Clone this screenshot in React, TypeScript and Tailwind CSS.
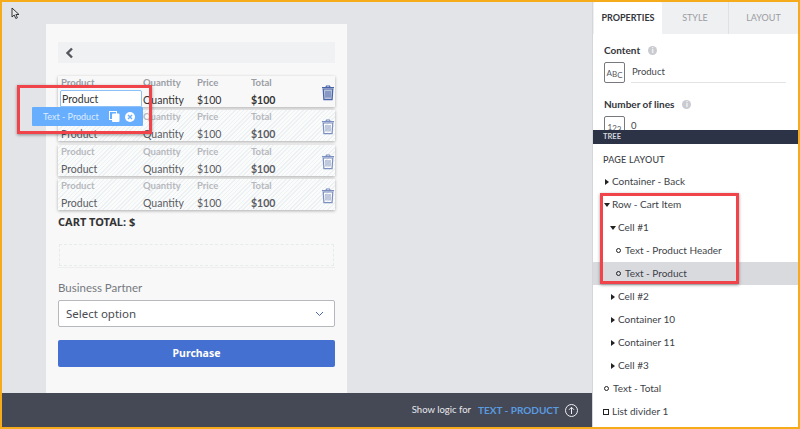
import React from "react";

const Trash = ({ ghost }: { ghost?: boolean }) => (
  <svg width="14" height="16" viewBox="0 0 14 16" fill="none" className={ghost ? "opacity-70" : ""}>
    <path d="M1 2.6h12M4.8 2.4l.7-1.4h3l.7 1.4" stroke="#4a64a8" strokeWidth="1.2" />
    <path d="M2.2 4h9.6l-.7 10.6H2.9z" fill={ghost ? "none" : "#b9c3db"} stroke="#4a64a8" strokeWidth="1.2" />
    <path d="M5 6v6.5M7 6v6.5M9 6v6.5" stroke="#4a64a8" strokeWidth="0.9" />
  </svg>
);

const CartRow = ({ active }: { active?: boolean }) => {
  const head = `text-[9.5px] leading-[14px] font-bold ${active ? "text-[#9a9da4]" : "text-[#b6b8bd]"}`;
  const value = `mt-[3px] text-[10.5px] leading-[14px] ${active ? "text-[#333]" : "text-[#5a5c62]"}`;
  return (
    <div
      className={`flex h-[31px] w-full items-stretch shadow-[0_1px_3px_rgba(0,0,0,0.3)] ${
        active
          ? "bg-[#f8f8f9]"
          : "bg-[repeating-linear-gradient(135deg,#fafbfb_0px,#fafbfb_2px,#edf1f4_2px,#edf1f4_3px)]"
      }`}
    >
      <div className="flex w-[85px] flex-col pl-[3px]">
        <span className={head}>Product</span>
        {active ? (
          <span className="mt-[0px] -ml-[1px] h-[17px] w-[82px] rounded-t-[2px] border border-[#8cc0f7] bg-white pt-[1px] pl-[1px] text-[10.5px] leading-[14px] text-[#333]">
            Product
          </span>
        ) : (
          <span className={value}>Product</span>
        )}
      </div>
      <div className="flex w-[54px] flex-col">
        <span className={head}>Quantity</span>
        <span className={value}>Quantity</span>
      </div>
      <div className="flex w-[54px] flex-col">
        <span className={head}>Price</span>
        <span className={value}>$100</span>
      </div>
      <div className="flex w-[70px] flex-col">
        <span className={head}>Total</span>
        <span className={`${value} font-bold`}>$100</span>
      </div>
      <div className="pt-[9px]">
        <Trash ghost={!active} />
      </div>
    </div>
  );
};

const Caret = ({ open }: { open?: boolean }) =>
  open ? (
    <span className="mr-[2px] h-0 w-0 border-x-[3.5px] border-t-[4px] border-x-transparent border-t-[#222]" />
  ) : (
    <span className="mr-[3px] ml-[1px] h-0 w-0 border-y-[3.5px] border-l-[4px] border-y-transparent border-l-[#222]" />
  );

const TreeRow = ({
  label,
  kind,
  indent,
  selected,
}: {
  label: string;
  kind: "closed" | "open" | "circle" | "square";
  indent: string;
  selected?: boolean;
}) => (
  <div className={`flex h-[23px] items-center ${indent} ${selected ? "bg-[#d9dade]" : ""}`}>
    {kind === "closed" && <Caret />}
    {kind === "open" && <Caret open />}
    {kind === "circle" && <span className="mr-[4px] h-[5px] w-[5px] rounded-full border border-[#222]" />}
    {kind === "square" && <span className="mr-[3px] h-[6px] w-[6px] border border-[#222]" />}
    <span className="text-[10px] text-[#3d3f48]">{label}</span>
  </div>
);

const Info = () => (
  <span className="ml-[8px] flex h-[9px] w-[9px] items-center justify-center rounded-full bg-[#c9cbd0] text-[7px] leading-none font-bold text-white">
    i
  </span>
);

export default function App() {
  return (
    <div className="relative flex h-[429px] w-[800px] overflow-hidden border-2 border-[#f5ab1a] bg-white font-['Lato',sans-serif]">
      <div className="flex w-[590px] flex-col bg-[#e3e4e8]">
        <div className="flex min-h-0 flex-1 flex-col pt-[22px] pl-[44px]">
          <div className="flex h-[369px] w-[301px] flex-col bg-[#f8f8f9] px-[12px] pt-[18px]">
            <div className="flex h-[21px] items-center bg-[#f0f1f3] pl-[7px]">
              <svg width="9" height="12" viewBox="0 0 9 12" fill="none">
                <path d="M7 1.5 2.5 6 7 10.5" stroke="#55575e" strokeWidth="2.4" />
              </svg>
            </div>
            <div className="mt-[13px] flex flex-col gap-[3.4px]">
              <CartRow active />
              <CartRow />
              <CartRow />
              <CartRow />
            </div>
            <div className="mt-[4px] font-['Noto_Sans',sans-serif] text-[11px] leading-[16px] font-bold text-[#333]">
              CART TOTAL: $
            </div>
            <div className="mt-[14px] border-b border-[#eceeef] pb-[1px]">
              <div className="mx-[1px] h-[22px] border border-dashed border-[#e6ecea]" />
            </div>
            <div className="mt-[12px] text-[11.5px] leading-[16px] text-[#76787e]">Business Partner</div>
            <div className="mt-[4px] flex h-[27px] items-center justify-between rounded-[2px] border border-[#b6b8bd] bg-white pr-[10px] pl-[7px] font-['Noto_Sans',sans-serif]">
              <span className="text-[11.5px] text-[#4a4c52]">Select option</span>
              <svg width="9" height="6" viewBox="0 0 9 6" fill="none">
                <path d="M1 1l3.5 3.5L8 1" stroke="#4a64a8" strokeWidth="1" />
              </svg>
            </div>
            <div className="mt-[13px] flex h-[27px] items-center justify-center rounded-[2px] bg-[#4470d1] font-['Noto_Sans',sans-serif] text-[10.5px] font-bold text-white">
              Purchase
            </div>
          </div>
        </div>
        <div className="flex h-[34px] items-center justify-end bg-[#454855] pr-[14px]">
          <span className="mr-[7px] text-[9.5px] text-[#e8e9ec]">Show logic for</span>
          <span className="mr-[6px] text-[10px] font-bold text-[#5a9ce0]">TEXT - PRODUCT</span>
          <svg width="13" height="13" viewBox="0 0 13 13" fill="none">
            <circle cx="6.5" cy="6.5" r="6" stroke="#f0f0f2" />
            <path d="M6.5 10V3.5M4 5.8l2.5-2.5L9 5.8" stroke="#f0f0f2" />
          </svg>
        </div>
      </div>

      <div className="flex w-[206px] flex-col border-l border-[#d5d6da] bg-white">
        <div className="flex h-[32px] bg-[#eff0f2] pl-[1px] text-[9px]">
          <div className="flex w-[68px] items-center justify-center rounded-t-[2px] bg-white font-bold text-[#33353c]">PROPERTIES</div>
          <div className="flex w-[67px] items-center justify-center border-r border-[#e0e1e4] text-[#9a9ca2]">STYLE</div>
          <div className="flex flex-1 items-center justify-center text-[#9a9ca2]">LAYOUT</div>
        </div>
        <div className="h-[96px] overflow-hidden pl-[11px]">
          <div className="mt-[10px] flex h-[13px] items-center text-[10px] font-bold text-[#33353c]">
            Content
            <Info />
          </div>
          <div className="mt-[5px] flex items-center">
            <div className="flex h-[21px] w-[21px] items-center justify-center rounded-[2px] border border-[#77797f] text-[8px] text-[#55575e]">
              A<span className="relative top-[1px]">B</span>
              <span className="relative top-[2px]">C</span>
            </div>
            <div className="ml-[6px] flex h-[21px] w-[155px] items-center border-b border-[#e3e4e7] pl-[1px] text-[9.5px] text-[#44464d]">
              Product
            </div>
          </div>
          <div className="mt-[15px] flex h-[13px] items-center text-[10px] font-bold text-[#33353c]">
            Number of lines
            <Info />
          </div>
          <div className="mt-[5px] flex items-center">
            <div className="flex h-[21px] w-[21px] items-center justify-center rounded-[2px] border border-[#77797f] text-[8px] text-[#55575e]">
              1<span className="relative top-[1px]">2</span>
              <span className="relative top-[2px]">3</span>
            </div>
            <div className="ml-[6px] text-[9.5px] text-[#44464d]">0</div>
          </div>
        </div>
        <div className="flex h-[14px] items-center bg-[#2d3347] pl-[10px] text-[7.5px] font-bold text-[#d5d7dc]">TREE</div>
        <div className="mt-[9px] pl-[10px] text-[9px] leading-[14px] font-medium tracking-[0.2px] text-[#3d3f48]">PAGE LAYOUT</div>
        <div className="mt-[3px] flex flex-col">
          <TreeRow label="Container - Back" kind="closed" indent="pl-[11px]" />
          <TreeRow label="Row - Cart Item" kind="open" indent="pl-[11px]" />
          <TreeRow label="Cell #1" kind="open" indent="pl-[17px]" />
          <TreeRow label="Text - Product Header" kind="circle" indent="pl-[23px]" />
          <TreeRow label="Text - Product" kind="circle" indent="pl-[23px]" selected />
          <TreeRow label="Cell #2" kind="closed" indent="pl-[17px]" />
          <TreeRow label="Container 10" kind="closed" indent="pl-[17px]" />
          <TreeRow label="Container 11" kind="closed" indent="pl-[17px]" />
          <TreeRow label="Cell #3" kind="closed" indent="pl-[17px]" />
          <TreeRow label="Text - Total" kind="circle" indent="pl-[11px]" />
          <TreeRow label="List divider 1" kind="square" indent="pl-[10px]" />
        </div>
      </div>

      {/* floating selection toolbar */}
      <div className="absolute top-[105px] left-[30px] flex h-[19px] w-[111px] items-center rounded-[1px] bg-[#68aeff] pl-[11px] text-[9px] text-[#dcecff]">
        Text - Product
        <svg className="ml-[10px]" width="11" height="11" viewBox="0 0 11 11">
          <rect x="0.5" y="0.5" width="7" height="8" fill="none" stroke="white" />
          <rect x="3" y="2.5" width="7.5" height="8.5" rx="1" fill="white" />
        </svg>
        <svg className="ml-[5px]" width="10" height="10" viewBox="0 0 10 10">
          <circle cx="5" cy="5" r="5" fill="white" />
          <path d="M3 3l4 4M7 3l-4 4" stroke="#68aeff" strokeWidth="1.3" />
        </svg>
      </div>

      {/* red annotation frames */}
      <div className="absolute top-[83px] left-[15px] h-[49px] w-[135px] border-[3px] border-[#f0434a] shadow-[0_1px_3px_rgba(0,0,0,0.4)]" />
      <div className="absolute top-[191px] left-[598px] h-[91px] w-[139px] border-[3px] border-[#f0434a] shadow-[0_1px_3px_rgba(0,0,0,0.4)]" />

      {/* mouse cursor */}
      <svg className="absolute top-[5px] left-[9px]" width="9" height="13" viewBox="0 0 9 13" fill="none">
        <path d="M1 1v9l2.2-2 1.6 3.5 1.6-.7-1.5-3.3H8z" fill="#e8e8ea" stroke="#222" strokeWidth="0.9" />
      </svg>
    </div>
  );
}
